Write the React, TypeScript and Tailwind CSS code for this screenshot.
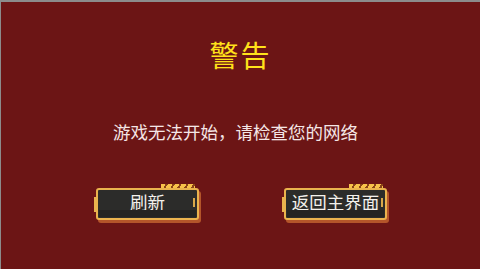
const FONT = "font-['Noto_Sans_CJK_SC','Noto_Sans',sans-serif]";

function GameButton({ label }: { label: string }) {
  return (
    <div className="relative w-[103px] h-[32px]">
      {/* hazard stripes on the top right */}
      <div className="absolute -top-[4px] right-[4px] w-[34px] h-[7px] bg-[repeating-linear-gradient(120deg,#f8c24a_0_4px,#8a4318_4px_6px)]" />
      <div className="relative h-full rounded-[3px] border-2 border-[#eab34e] bg-[#2c2c2a] shadow-[2px_3px_0_#b4552a] flex justify-center">
        <span className={`${FONT} text-[17.5px] leading-none text-[#f4f1ec] pt-[3px]`}>{label}</span>
        {/* side ticks */}
        <div className="absolute left-[-4px] top-[7px] w-[2px] h-[15px] bg-[#eab34e]" />
        <div className="absolute right-[2px] top-[8px] w-[2px] h-[9px] bg-[#d9a84a]" />
        <div className="absolute left-[1px] right-[1px] bottom-[1px] h-[7px] bg-[#242422]" />
      </div>
    </div>
  );
}

export default function App() {
  return (
    <div className="w-[480px] h-[269px] bg-[#6c1515] border-t-2 border-l border-[#8c8c8c] flex flex-col items-center overflow-hidden">
      <h1 className={`${FONT} text-[29px] leading-none text-[#ffe21a] mt-[38px] tracking-[2px]`}>警告</h1>
      <p className={`${FONT} text-[17.5px] leading-none text-[#f5e6e6] mt-[54px] mr-[10px]`}>
        游戏无法开始，请检查您的网络
      </p>
      <div className="flex gap-[85px] mt-[47px] ml-[2px]">
        <GameButton label="刷新" />
        <GameButton label="返回主界面" />
      </div>
    </div>
  );
}
